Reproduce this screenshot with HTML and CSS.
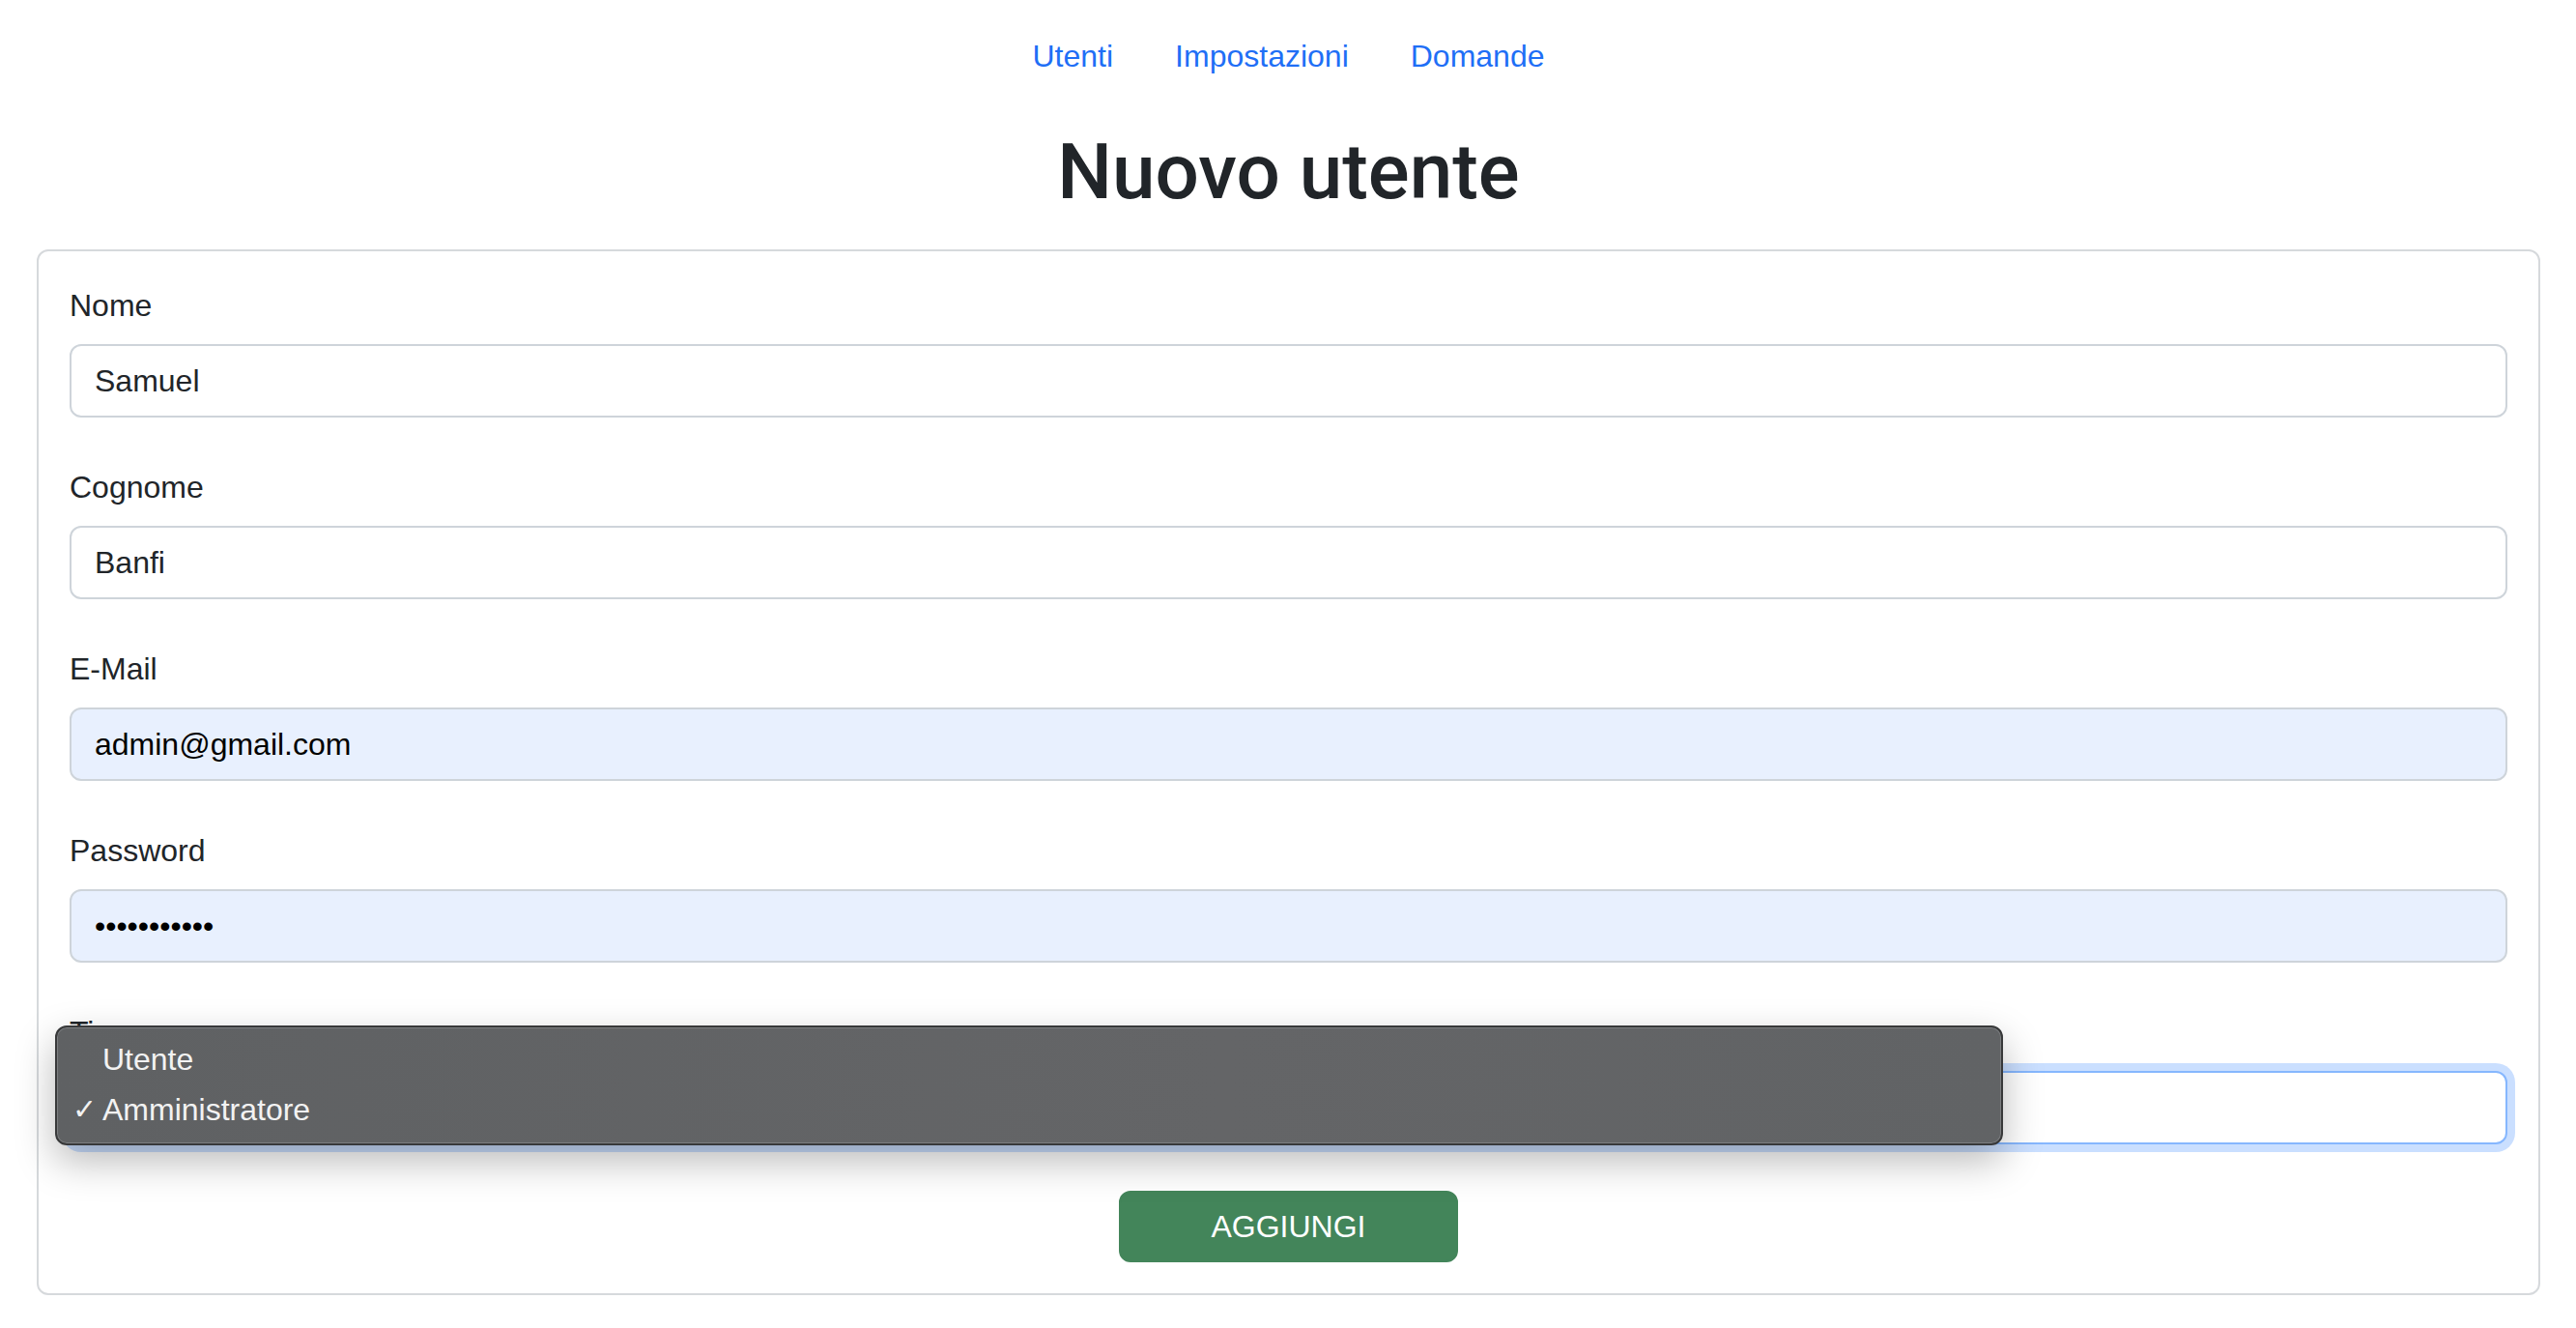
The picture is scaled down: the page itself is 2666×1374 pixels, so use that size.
FILE: index.html
```html
<!DOCTYPE html>
<html lang="it">
<head>
<meta charset="utf-8">
<title>Nuovo utente</title>
<link rel="stylesheet" href="styles.css">
</head>
<body>
<div class="page">
  <nav class="nav">
    <a class="nav-link" href="#">Utenti</a>
    <a class="nav-link" href="#">Impostazioni</a>
    <a class="nav-link" href="#">Domande</a>
  </nav>
  <h1 class="title">Nuovo utente</h1>
  <form class="card">
    <div class="group">
      <label class="label">Nome</label>
      <input class="field" type="text" value="Samuel">
    </div>
    <div class="group">
      <label class="label">Cognome</label>
      <input class="field" type="text" value="Banfi">
    </div>
    <div class="group">
      <label class="label">E-Mail</label>
      <input class="field autofill" type="text" value="admin@gmail.com">
    </div>
    <div class="group">
      <label class="label">Password</label>
      <input class="field autofill" type="password" value="12345678901">
    </div>
    <div class="group group-select">
      <label class="label">Tipo</label>
      <div class="field field-focus"></div>
      <div class="menu">
        <div class="menu-item"><span class="check"></span>Utente</div>
        <div class="menu-item"><span class="check">✓</span>Amministratore</div>
      </div>
    </div>
    <div class="actions">
      <button class="btn" type="button">AGGIUNGI</button>
    </div>
  </form>
</div>
</body>
</html>
```

FILE: styles.css
```css
* { box-sizing: border-box; }
html, body { margin: 0; padding: 0; background: #fff; }
body {
  font-family: "Liberation Sans", Arial, sans-serif;
  font-size: 32px;
  line-height: 1.5;
  color: #212529;
}
.page { padding: 18px 37px 0 38px; }
.nav {
  display: flex;
  justify-content: center;
  margin-bottom: 32px;
}
.nav-link {
  padding: 16px 32px;
  color: #1f6ff6;
  text-decoration: none;
}
.title {
  margin: 0 0 32px;
  font-family: Roboto, "Liberation Sans", sans-serif;
  font-size: 80px;
  font-weight: 500;
  line-height: 1.2;
  text-align: center;
  color: #212529;
}
.card {
  border: 2px solid #d6d9dc;
  border-radius: 12px;
  padding: 32px;
}
.group {
  margin-bottom: 48px;
  position: relative;
}
.label {
  display: block;
  margin-bottom: 16px;
}
.field {
  display: block;
  width: 100%;
  height: 76px;
  padding: 12px 24px;
  font: inherit;
  color: #212529;
  background: #fff;
  border: 2px solid #ced4da;
  border-radius: 12px;
  outline: none;
}
.autofill { background: #e8f0fe; color: #000; }
.field-focus {
  border-color: #86b7fe;
  box-shadow: 0 0 0 8px rgba(13, 110, 253, 0.22);
}
.menu {
  position: absolute;
  left: -15px;
  top: 17px;
  width: 2016px;
  height: 124px;
  padding: 7px 0 0;
  background: linear-gradient(90deg, #5f6163, #646567 60%, #616365);
  border: 2px solid #38393a;
  border-radius: 12px;
  box-shadow: inset 0 0 0 1px #7c7e80, 0 16px 40px rgba(0, 0, 0, 0.28);
  color: #f2f2f2;
  font-size: 32px;
  line-height: 52px;
}
.menu-item { display: flex; align-items: center; }
.check {
  display: inline-block;
  width: 47px;
  padding-left: 16px;
  font-size: 30px;
}
.actions {
  display: flex;
  justify-content: center;
}
.btn {
  font: inherit;
  color: #fff;
  background: #43855a;
  border: 2px solid #43855a;
  border-radius: 12px;
  padding: 11px 93px;
  line-height: 48px;
}
```
